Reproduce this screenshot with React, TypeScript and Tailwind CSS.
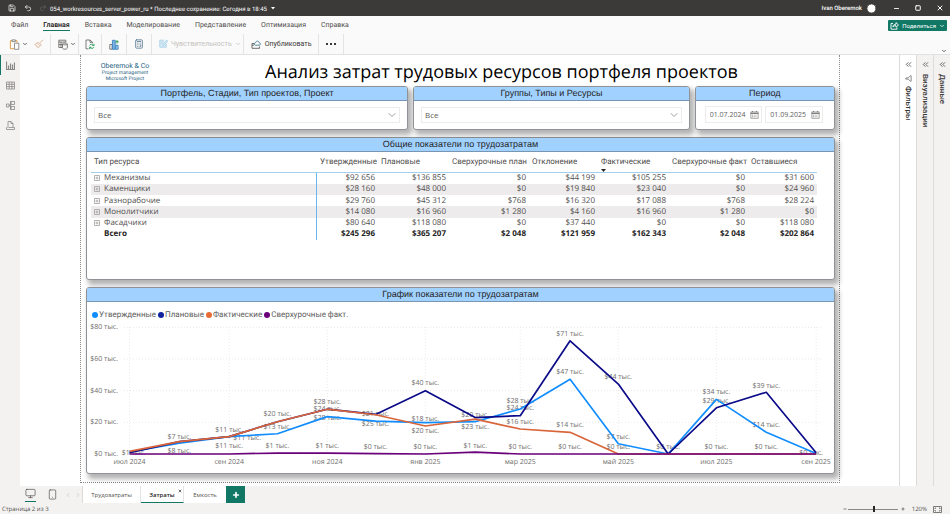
import type { ReactNode } from "react";
import { ChevronDown, ChevronsLeft, Filter, Minus, Plus, Redo2, Save, Square, Undo2, X, Calculator, Monitor, Smartphone, ChevronLeft, ChevronRight, CircleUserRound } from "lucide-react";

const menu = ["Файл", "Главная", "Вставка", "Моделирование", "Представление", "Оптимизация", "Справка"];

const columns = ["Утвержденные", "Плановые", "Сверхурочные план", "Отклонение", "Фактические", "Сверхурочные факт", "Оставшиеся"];

const rows = [
  { name: "Механизмы", values: ["$92 656", "$136 855", "$0", "$44 199", "$105 255", "$0", "$31 600"] },
  { name: "Каменщики", values: ["$28 160", "$48 000", "$0", "$19 840", "$23 040", "$0", "$24 960"] },
  { name: "Разнорабочие", values: ["$29 760", "$45 312", "$768", "$16 320", "$17 088", "$768", "$28 224"] },
  { name: "Монолитчики", values: ["$14 080", "$16 960", "$1 280", "$4 160", "$16 960", "$1 280", "$0"] },
  { name: "Фасадчики", values: ["$80 640", "$118 080", "$0", "$37 440", "$0", "$0", "$118 080"] },
];
const total = ["$245 296", "$365 207", "$2 048", "$121 959", "$162 343", "$2 048", "$202 864"];

// days since 1 July 2024 for the first day of every month
const days = [0, 31, 62, 92, 123, 153, 184, 215, 243, 274, 304, 335, 365, 396, 427];
const ticks = ["июл 2024", "сен 2024", "ноя 2024", "янв 2025", "мар 2025", "май 2025", "июл 2025", "сен 2025"];

const series = [
  { name: "Утвержденные", color: "#118dff", stroke: "#118dff", data: [1.3, 6.8, 11, 12.8, 23.6, 20.8, 19.8, 20.4, 28.4, 47.2, 6.5, 0, 34.5, 13.7, 0.3] },
  { name: "Плановые", color: "#12239e", stroke: "#0b0b8a", data: [0.8, 7.8, 11, 20.4, 28.3, 25, 40, 23, 24.2, 71.5, 44.2, 0, 29.2, 39, 0.8] },
  { name: "Фактические", color: "#e66c37", stroke: "#d9653a", data: [1.7, 7.8, 11, 20.4, 28.3, 24.8, 17.7, 22, 15.8, 13.7, 0, 0, 0, 0, 0] },
  { name: "Сверхурочные факт.", color: "#6b007b", stroke: "#6b007b", data: [0, 0, 0, 0.6, 0.6, 0.2, 0, 1.2, 0, 0, 0, 0, 0, 0, 0] },
];

// month index, thousands, baseline, optional shift
const labels: [number, number, number, number?][] = [
  [0, 1, 136, 4],
  [1, 7, 120], [1, 8, 134],
  [2, 11, 113], [2, 11, 121, 18], [2, 11, 129],
  [3, 20, 97], [3, 13, 110], [3, 1, 129],
  [4, 28, 85], [4, 24, 92], [4, 28, 101], [4, 1, 129],
  [5, 21, 97], [5, 25, 107], [5, 0, 130],
  [6, 40, 66], [6, 18, 102], [6, 20, 114], [6, 0, 130],
  [7, 20, 98], [7, 23, 110], [7, 1, 129],
  [8, 28, 84], [8, 24, 91], [8, 16, 105], [8, 0, 130],
  [9, 71, 17], [9, 47, 55], [9, 14, 108], [9, 0, 130],
  [10, 44, 60], [10, 7, 120], [10, 0, 130],
  [11, 0, 130],
  [12, 34, 75], [12, 29, 84], [12, 0, 130],
  [13, 39, 69], [13, 14, 108], [13, 0, 130],
  [14, 0, 136, -5],
];

const px = (i: number) => 42.5 + days[i] * 1.608;
const py = (v: number) => 135 - v * 1.583;

function Card({ title, className = "", children }: { title: string; className?: string; children: ReactNode }) {
  return (
    <section className={`flex flex-col overflow-hidden rounded-[3px] border border-[#8f9296] bg-white shadow-[3px_4px_5px_1px_rgba(0,0,0,0.3)] ${className}`}>
      <h2 className="h-[14px] shrink-0 border-b border-[#7896b4] bg-[#a0d1ff] text-center font-['Liberation_Sans',sans-serif] text-[9px] leading-[13px] text-[#252423]">{title}</h2>
      {children}
    </section>
  );
}

function Slicer({ label }: { label: string }) {
  return (
    <div className="relative mx-[7px] mt-[6px]">
      <select aria-label={label} className="block h-[16px] w-full appearance-none border border-[#eeeceb] bg-white px-[3px] text-[8px] leading-[14px] text-[#605e5c]">
        <option>Все</option>
      </select>
      <ChevronDown className="pointer-events-none absolute top-[2px] right-[2px] h-3 w-3" stroke="#807e7c" strokeWidth={1.5} />
    </div>
  );
}

function DateBox({ value, label }: { value: string; label: string }) {
  return (
    <div className="flex h-[17px] min-w-0 flex-1 items-center border border-[#eeeceb] pr-[2px] pl-[4px]">
      <input aria-label={label} defaultValue={value} className="w-0 min-w-0 flex-1 text-[7px] leading-[15px] text-[#605e5c] outline-none" />
      <svg viewBox="0 0 9 8" className="h-2 w-[9px] shrink-0" fill="none" stroke="#807e7c">
        <rect x="0.9" y="1" width="7.2" height="6.2" strokeWidth="0.7" />
        <path d="M0.6 2.3h7.8M2.5 0v1M6.5 0v1" strokeWidth="1.2" />
        <path d="M2 4.2h5M2 5.7h5" strokeWidth="0.7" strokeDasharray="1 0.7" />
      </svg>
    </div>
  );
}

function Sep() {
  return <span className="h-full w-px bg-[#e6e4e2]" />;
}

function TitleBar() {
  return (
    <header className="flex h-4 items-center bg-[#3b3a39] pl-2 font-['Roboto',sans-serif] text-[6px] text-white">
      <Save className="h-2 w-2" />
      <Undo2 className="ml-2 h-2 w-2" />
      <Redo2 className="ml-[7px] h-2 w-2 text-[#666462]" />
      <span className="mt-[3px] ml-[3px] whitespace-nowrap">054_workresources_server_power_ru * Последнее сохранение: Сегодня в 18:45</span>
      <svg viewBox="0 0 4 3" className="mt-px ml-1 h-[3px] w-1"><path d="M0 0h4L2 2.6z" fill="#fff" /></svg>
      <span className="mt-px ml-auto font-medium">Ivan Oberemok</span>
      <CircleUserRound className="ml-1 h-[11px] w-[11px] fill-white text-[#3b3a39]" strokeWidth={2} />
      <button aria-label="Свернуть" className="ml-4"><Minus className="h-[7px] w-[7px]" strokeWidth={3} /></button>
      <button aria-label="Развернуть" className="ml-[15px]"><Square className="h-[6px] w-[6px]" strokeWidth={4} /></button>
      <button aria-label="Закрыть" className="mr-[6px] ml-[15px]"><X className="h-2 w-2" strokeWidth={3} /></button>
    </header>
  );
}

function Ribbon() {
  return (
    <div className="border-b border-[#e4e2e0] bg-[#fafafa] font-['Roboto',sans-serif] text-[#3b3a39]">
      <div className="flex h-[18px] items-center">
        <nav className="flex gap-[15px] pl-[11px] text-[7px] leading-[10px]">
          {menu.map((m) => (
            <a key={m} href="#" className={m === "Главная" ? "border-b border-[#117865] font-semibold text-[#252423]" : "border-b border-transparent text-[#504e4c]"}>{m}</a>
          ))}
        </nav>
        <button className="mt-[1px] mr-[3px] ml-auto flex h-[11px] items-center gap-[3px] rounded-[1px] bg-[#117865] pr-[2px] pl-[2px] text-[6px] text-white">
          <svg viewBox="0 0 9 8" className="h-2 w-[9px]" fill="none" stroke="#fff" strokeWidth="0.9">
            <path d="M3 1.5H1v5.7h6V5.5M2.8 5c.3-2 1.5-2.8 3.2-2.8V.6L8.5 3 6 5.2V3.7c-1.5-.1-2.5.2-3.2 1.3z" />
          </svg>
          Поделиться
          <ChevronDown className="h-[6px] w-[6px]" strokeWidth={3} />
        </button>
      </div>
      <div className="flex h-[20px] items-stretch text-[7px]">
        <button aria-label="Вставить" className="ml-[9px] flex items-center gap-[2px]">
          <svg viewBox="0 0 11 11" className="h-[11px] w-[11px]" fill="none">
            <path d="M3 1.7H1.4v8H5M6.5 1.7H8v2" stroke="#e2a04c" />
            <path d="M3 .9h3.4v1.7H3z" stroke="#7a7876" strokeWidth="0.8" />
            <path d="M5.5 4.2h4.3v6.1H5.5z" stroke="#7a7876" strokeWidth="0.8" fill="#fff" />
          </svg>
          <ChevronDown className="h-[6px] w-[6px]" strokeWidth={3} />
        </button>
        <button aria-label="Формат по образцу" className="mr-[6px] ml-[6px] flex items-center">
          <svg viewBox="0 0 10 10" className="h-[10px] w-[10px]" fill="none" stroke="#dfb79b" strokeWidth="0.9">
            <path d="M9.3.8 6 3.8M4.3 3l3 3-1 1-3-3zM3.3 4 .8 5.2l3.4 3.7L6.3 7M2.2 6.8l1-.8M3.2 7.9l1-.9" />
          </svg>
        </button>
        <Sep />
        <button aria-label="Получить данные" className="mr-[2px] ml-[7px] flex items-center gap-[2px]">
          <svg viewBox="0 0 10 11" className="h-[11px] w-[10px]" fill="none" stroke="#605e5c" strokeWidth="0.8">
            <path d="M4 8.5H.8V1.2h7v2M.8 3h7M3 3v5.5M.8 5.6H4" />
            <path d="M4.5 5v4.2c0 1.3 4.8 1.3 4.8 0V5M4.5 5c0-1.2 4.8-1.2 4.8 0s-4.8 1.2-4.8 0z" fill="#fff" />
          </svg>
          <ChevronDown className="h-[6px] w-[6px]" strokeWidth={3} />
        </button>
        <Sep />
        <button aria-label="Обновить" className="mx-[6px] flex items-center">
          <svg viewBox="0 0 10 11" className="h-[11px] w-[10px]" fill="none">
            <path d="M3.5 9.8H1V1h4l2.5 2.3v1M5 1v2.3h2.5" stroke="#605e5c" strokeWidth="0.8" />
            <path d="M4.5 6.5c.8-1.5 3-1.6 4-.2M9 4.8v1.8H7.2M9 8.2c-.8 1.5-3 1.6-4 .2M4.6 10V8.2h1.8" stroke="#239a55" strokeWidth="0.9" />
          </svg>
        </button>
        <Sep />
        <button aria-label="Создать визуальный элемент" className="mx-[7px] flex items-center">
          <svg viewBox="0 0 10 11" className="h-[11px] w-[10px]" fill="none">
            <path d="M.8 5.5h2.4v4.7H.8z" stroke="#605e5c" strokeWidth="0.8" />
            <path d="M3.4 1.3h2.8v9H3.4z" fill="#7fb5e6" stroke="#2b77b8" strokeWidth="0.8" />
            <path d="M6.7 6.3h2.4v4H6.7z" stroke="#2b77b8" strokeWidth="0.8" fill="#9ac7ef" />
            <path d="M8 1v3.6M6.3 2.8h3.5" stroke="#239a55" strokeWidth="0.9" />
          </svg>
        </button>
        <Sep />
        <button aria-label="Новая мера" className="mx-[7px] flex items-center"><Calculator className="h-[10px] w-[10px] text-[#55778f]" /></button>
        <Sep />
        <button disabled className="mr-[2px] ml-[7px] flex items-center gap-[3px] text-[#c4c2c0]">
          <svg viewBox="0 0 9 10" className="h-[10px] w-[9px]" fill="none" stroke="#9fcbe4" strokeWidth="0.8">
            <path d="M5 1.2H.8v7h6.5V5M2.2 3.2h2M2.2 5h1.5M4 7l.3-1.6L7.7 1l1 .9L5.5 6z" fill="#dceef7" />
          </svg>
          Чувствительность
          <ChevronDown className="h-[6px] w-[6px]" strokeWidth={3} />
        </button>
        <Sep />
        <button className="mx-[7px] flex items-center gap-[4px]">
          <svg viewBox="0 0 10 10" className="h-[10px] w-[10px]" fill="none" strokeWidth="0.9">
            <path d="M3.5 4.5H1v4.8h7.5V7.5M1 6.2h2" stroke="#605e5c" />
            <path d="M4.2 6.2h4.1c1.6-.2 1.5-2.3 0-2.4C8 1.7 5 1.6 4.6 3.6c-1.7.2-1.7 2.4-.4 2.6z" stroke="#477f98" />
          </svg>
          Опубликовать
        </button>
        <Sep />
        <button aria-label="Ещё" className="mx-[7px] flex items-center">
          <svg viewBox="0 0 10 2" className="h-[2px] w-[10px]"><path d="M0 0h2v2H0zM4 0h2v2H4zM8 0h2v2H8z" fill="#3b3a39" /></svg>
        </button>
        <Sep />
        <button aria-label="Свернуть ленту" className="mr-[3px] ml-auto self-end"><ChevronDown className="h-[6px] w-[6px]" strokeWidth={3} /></button>
      </div>
    </div>
  );
}

const views = [
  { name: "Отчет", path: "M.5.5v8h8v-7M2.5 8.5v-4M4.5 8.5v-6M6.5 8.5v-5" },
  { name: "Таблица", path: "M.5 1h8v7h-8zM.5 3.3h8M.5 5.6h8M3.2 1v7M5.9 1v7" },
  { name: "Модель", path: "M5 .5h3.5v3H5zM5 5.5h3.5v3H5zM.5 3H3v3H.5zM3 4.5h1L5 2M4 4.5 5 7M4.5 0v9" },
  { name: "DAX", path: "M2 6V.5h3L7 2.5V6M5 .5v2h2M.5 8.5h8v-2h-6M.5 8.5v-2h1" },
];

function Rail() {
  return (
    <nav className="flex w-5 shrink-0 flex-col bg-[#f3f2f1]">
      {views.map((v, i) => (
        <button key={v.name} aria-label={v.name} className={`flex h-5 items-center justify-center border-l ${i === 0 ? "border-[#117865]" : "border-transparent"}`}>
          <svg viewBox="0 0 9 9" className="h-[9px] w-[9px]" fill="none" stroke="#8a8886" strokeWidth={i === 0 ? 1.2 : 0.8}><path d={v.path} /></svg>
        </button>
      ))}
    </nav>
  );
}

function ResourceTable() {
  return (
    <div className="h-[127px] pt-[2px] pr-[17px] pl-[4px]">
      <table className="w-full table-fixed text-[8px] leading-[10px] text-[#504e4c]">
        <colgroup>
          <col />
          <col className="w-[61px]" />
          <col className="w-[71px]" />
          <col className="w-[80px]" />
          <col className="w-[69px]" />
          <col className="w-[71px]" />
          <col className="w-[79px]" />
          <col className="w-[69px]" />
        </colgroup>
        <thead className="h-[18px] border-b border-[#a3cfea] text-left font-['Roboto',sans-serif]">
          <tr>
            <th className="pb-[2px] pl-[3px] font-normal">Тип ресурса</th>
            {columns.map((c) => (
              <th key={c} className="relative pb-[2px] pl-[3px] font-normal whitespace-nowrap">
                {c}
                {c === "Фактические" && (
                  <svg viewBox="0 0 5 3" className="absolute bottom-0 left-[3px] h-[3px] w-[5px]"><path d="M0 0h5L2.5 3z" fill="#252423" /></svg>
                )}
              </th>
            ))}
          </tr>
        </thead>
        <tbody className="h-[68px]">
          {rows.map((r) => (
            <tr key={r.name} className="even:bg-[#edebeb]">
              <th className="p-0 text-left font-normal shadow-[inset_-1px_0_#6bb4ec]">
                <span className="flex items-center gap-[4px] pl-[3px]">
                  <svg viewBox="0 0 6 6" className="h-[6px] w-[6px]" fill="none" stroke="#a19f9d" strokeWidth="0.8"><path d="M.5.5h5v5h-5zM1.5 3h3M3 1.5v3" /></svg>
                  {r.name}
                </span>
              </th>
              {r.values.map((v, i) => <td key={i} className="p-0 pr-[3px] text-right">{v}</td>)}
            </tr>
          ))}
          <tr className="font-bold text-[#252423]">
            <th className="p-0 pl-[13px] text-left shadow-[inset_-1px_0_#6bb4ec]">Всего</th>
            {total.map((v, i) => <td key={i} className="p-0 pr-[3px] text-right">{v}</td>)}
          </tr>
        </tbody>
      </table>
    </div>
  );
}

function CostChart() {
  return (
    <>
      <ul className="flex gap-[2px] pt-[8px] pl-[5px] font-['Roboto',sans-serif] text-[8px] leading-[10px] text-[#605e5c]">
        {series.map((s) => (
          <li key={s.name} className="flex items-center gap-px">
            <svg viewBox="0 0 6 6" className="h-[6px] w-[6px]"><circle cx="3" cy="3" r="3" fill={s.color} /></svg>
            {s.name}
          </li>
        ))}
      </ul>
      <svg viewBox="0 1 747 153" className="block h-auto w-full" fontSize="7" fill="#706e6c" role="img" aria-label="График показатели по трудозатратам">
        {[0, 20, 40, 60, 80].map((v) => (
          <g key={v}>
            <path d={`M37 ${py(v)}H735`} stroke="#e6e4e2" strokeWidth="0.8" strokeDasharray="1 2" />
            <text x="31" y={py(v) + 2} textAnchor="end">{`$${v} тыс.`}</text>
          </g>
        ))}
        {ticks.map((t, i) => (
          <g key={t}>
            <path d={`M${px(i * 2)} 8V135`} stroke="#e6e4e2" strokeWidth="0.8" strokeDasharray="1 2" />
            <text x={px(i * 2)} y="145" textAnchor="middle">{t}</text>
          </g>
        ))}
        {labels.map(([i, v, y, dx = 0], n) => (
          <text key={n} x={px(i) + dx} y={y} textAnchor="middle">{`$${v} тыс.`}</text>
        ))}
        {series.map((s) => (
          <polyline key={s.name} points={s.data.map((v, i) => `${px(i)},${py(v)}`).join(" ")} fill="none" stroke={s.stroke} strokeWidth="1.7" strokeLinejoin="round" />
        ))}
      </svg>
    </>
  );
}

function Report() {
  return (
    <main className="min-w-0 flex-1 bg-white pr-[59px] pb-[3px] pl-[60px]">
      <div className="h-full border-x border-b border-dotted border-[#8a8886] pr-[4px] pb-[8px] pl-[5px]">
        <div className="flex h-[31px] items-center">
          <div className="w-[78px] pt-[3px] text-center font-['Roboto',sans-serif] text-[5px] leading-[6px] text-[#1f6484]">
            <p className="text-[7px] leading-[8px]">Oberemok &amp; Co</p>
            <p>Project management</p>
            <p>Microsoft Project</p>
          </div>
          <h1 className="flex-1 pt-[2px] pl-[4px] text-center text-[18px] leading-[24px] text-black">Анализ затрат трудовых ресурсов портфеля проектов</h1>
        </div>
        <div className="flex gap-[5px]">
          <Card title="Портфель, Стадии, Тип проектов, Проект" className="h-[44px] flex-[324]"><Slicer label="Портфель" /></Card>
          <Card title="Группы, Типы и Ресурсы" className="h-[44px] flex-[278]"><Slicer label="Ресурсы" /></Card>
          <Card title="Период" className="h-[44px] flex-[140]">
            <div className="mt-[5px] mr-[11px] ml-[9px] flex gap-[3px]">
              <DateBox value="01.07.2024" label="Начало периода" />
              <DateBox value="01.09.2025" label="Конец периода" />
            </div>
          </Card>
        </div>
        <Card title="Общие показатели по трудозатратам" className="mt-[7px]"><ResourceTable /></Card>
        <Card title="График показатели по трудозатратам" className="mt-[7px]"><CostChart /></Card>
      </div>
    </main>
  );
}

function Panes() {
  return (
    <div className="flex shrink-0 font-['Roboto',sans-serif] text-[8px] leading-[12px] text-[#3b3a39]">
      {["Фильтры", "Визуализации", "Данные"].map((p, i) => (
        <button key={p} className={`flex w-[17px] flex-col items-center border-l border-[#dddbd9] pt-[5px] ${i === 0 ? "bg-white" : "bg-[#f3f2f1]"}`}>
          <ChevronsLeft className="h-[9px] w-[9px]" strokeWidth={2} />
          {i === 0 && <Filter className="mt-[6px] h-[7px] w-[7px] rotate-90" />}
          <span className={`font-medium [writing-mode:vertical-rl] ${i === 0 ? "mt-[4px]" : "mt-[5px]"}`}>{p}</span>
        </button>
      ))}
    </div>
  );
}

function Footer() {
  return (
    <footer className="bg-[#f3f2f1] text-[6px] text-[#504e4c]">
      <div className="flex h-[17px] pl-5">
        <div className="flex w-[63px] items-center border-r border-[#dddbd9] pl-[5px]">
          <button aria-label="Компьютер" className="border-b border-[#117865] pb-[2px]"><Monitor className="h-[11px] w-[11px]" strokeWidth={1.5} /></button>
          <button aria-label="Телефон" className="ml-[11px]"><Smartphone className="h-[11px] w-[11px]" strokeWidth={1.5} /></button>
          <ChevronLeft className="ml-[7px] h-[6px] w-[6px] text-[#b3b0ad]" />
          <ChevronRight className="ml-[4px] h-[6px] w-[6px] text-[#b3b0ad]" />
        </div>
        <button className="w-[58px] border-r border-[#e6e4e2] bg-white pt-px">Трудозатраты</button>
        <button className="relative w-[43px] border-r border-b border-r-[#e6e4e2] border-b-[#117865] bg-white pt-[2px] font-semibold text-[#252423]">
          Затраты
          <X className="absolute top-[3px] right-px h-[4px] w-[4px]" strokeWidth={4} />
        </button>
        <button className="w-[42px] bg-white pt-px">Емкость</button>
        <button aria-label="Новая страница" className="flex w-[19px] items-center justify-center bg-[#117865] text-white"><Plus className="h-[8px] w-[8px]" strokeWidth={5} /></button>
      </div>
      <div className="flex h-3 items-center pr-2 pl-[2px]">
        <span>Страница 2 из 3</span>
        <Minus className="mr-px ml-auto h-[4px] w-[4px]" strokeWidth={4} />
        <input type="range" aria-label="Масштаб" defaultValue={53} className="h-px w-[50px] appearance-none bg-[#8a8886] [&::-webkit-slider-thumb]:h-[6px] [&::-webkit-slider-thumb]:w-[2px] [&::-webkit-slider-thumb]:appearance-none [&::-webkit-slider-thumb]:bg-[#252423]" />
        <Plus className="ml-[3px] h-[4px] w-[4px]" strokeWidth={4} />
        <span className="ml-[7px]">120%</span>
        <svg viewBox="0 0 9 7" className="ml-[6px] h-[7px] w-[9px]" fill="none" stroke="#605e5c" strokeWidth="0.8"><path d="M.5.5h8v6h-8zM2 3V2h1M6 2h1v1M7 4v1H6M3 5H2V4" /></svg>
      </div>
    </footer>
  );
}

export default function App() {
  return (
    <div className="flex min-h-screen flex-col bg-white font-['Open_Sans',sans-serif] [text-rendering:geometricPrecision]">
      <TitleBar />
      <Ribbon />
      <div className="flex flex-1">
        <Rail />
        <Report />
        <Panes />
      </div>
      <Footer />
    </div>
  );
}
